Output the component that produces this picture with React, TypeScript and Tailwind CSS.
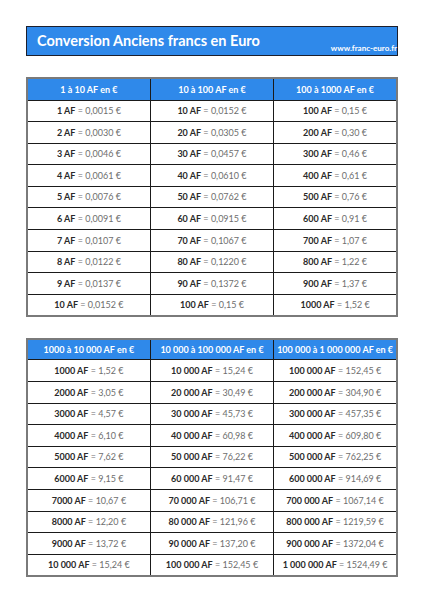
const font = { fontFamily: 'Lato, "Open Sans", sans-serif' };

const table1 = {
  heads: ['1 à 10 AF en €', '10 à 100 AF en €', '100 à 1000 AF en €'],
  rows: [
    [['1 AF', '0,0015'], ['10 AF', '0,0152'], ['100 AF', '0,15']],
    [['2 AF', '0,0030'], ['20 AF', '0,0305'], ['200 AF', '0,30']],
    [['3 AF', '0,0046'], ['30 AF', '0,0457'], ['300 AF', '0,46']],
    [['4 AF', '0,0061'], ['40 AF', '0,0610'], ['400 AF', '0,61']],
    [['5 AF', '0,0076'], ['50 AF', '0,0762'], ['500 AF', '0,76']],
    [['6 AF', '0,0091'], ['60 AF', '0,0915'], ['600 AF', '0,91']],
    [['7 AF', '0,0107'], ['70 AF', '0,1067'], ['700 AF', '1,07']],
    [['8 AF', '0,0122'], ['80 AF', '0,1220'], ['800 AF', '1,22']],
    [['9 AF', '0,0137'], ['90 AF', '0,1372'], ['900 AF', '1,37']],
    [['10 AF', '0,0152'], ['100 AF', '0,15'], ['1000 AF', '1,52']],
  ],
};

const table2 = {
  heads: ['1000 à 10 000 AF en €', '10 000 à 100 000 AF en €', '100 000 à 1 000 000 AF en €'],
  rows: [
    [['1000 AF', '1,52'], ['10 000 AF', '15,24'], ['100 000 AF', '152,45']],
    [['2000 AF', '3,05'], ['20 000 AF', '30,49'], ['200 000 AF', '304,90']],
    [['3000 AF', '4,57'], ['30 000 AF', '45,73'], ['300 000 AF', '457,35']],
    [['4000 AF', '6,10'], ['40 000 AF', '60,98'], ['400 000 AF', '609,80']],
    [['5000 AF', '7,62'], ['50 000 AF', '76,22'], ['500 000 AF', '762,25']],
    [['6000 AF', '9,15'], ['60 000 AF', '91,47'], ['600 000 AF', '914,69']],
    [['7000 AF', '10,67'], ['70 000 AF', '106,71'], ['700 000 AF', '1067,14']],
    [['8000 AF', '12,20'], ['80 000 AF', '121,96'], ['800 000 AF', '1219,59']],
    [['9000 AF', '13,72'], ['90 000 AF', '137,20'], ['900 000 AF', '1372,04']],
    [['10 000 AF', '15,24'], ['100 000 AF', '152,45'], ['1 000 000 AF', '1524,49']],
  ],
};

type Data = { heads: string[]; rows: string[][][] };

const ConvTable = ({ data, headH }: { data: Data; headH: string }) => (
  <table className="w-full table-fixed border-collapse border-2 border-[#7a7a7a] text-[9px]">
    <thead>
      <tr className={headH}>
        {data.heads.map((h) => (
          <th key={h} className="whitespace-nowrap border border-[#1a1a1a] bg-[#2f89ea] p-0 text-center font-bold text-white">
            {h}
          </th>
        ))}
      </tr>
    </thead>
    <tbody>
      {data.rows.map((row, i) => (
        <tr key={i} className="h-[21.6px]">
          {row.map(([af, eur]) => (
            <td key={af} className="whitespace-nowrap border border-[#1a1a1a] p-0 text-center text-[#6e6e6e]">
              <span className="font-bold text-[#2a2a2a]">{af}</span> = {eur} €
            </td>
          ))}
        </tr>
      ))}
    </tbody>
  </table>
);

export default function App() {
  return (
    <div className="flex min-h-[600px] w-[424px] flex-col bg-white px-[26px] pt-[26px]" style={font}>
      <div className="flex h-[30px] items-stretch border border-[#1c1f2c] bg-[#2f89ea]">
        <div className="flex flex-1 items-center pl-[10px] text-[14.5px] font-bold text-white">
          Conversion Anciens francs en Euro
        </div>
        <div className="flex items-end pb-[1px] text-[8px] font-bold text-white">www.franc-euro.fr</div>
      </div>
      <div className="mt-[21px]">
        <ConvTable data={table1} headH="h-[22px]" />
      </div>
      <div className="mt-[21px]">
        <ConvTable data={table2} headH="h-[21px]" />
      </div>
    </div>
  );
}
